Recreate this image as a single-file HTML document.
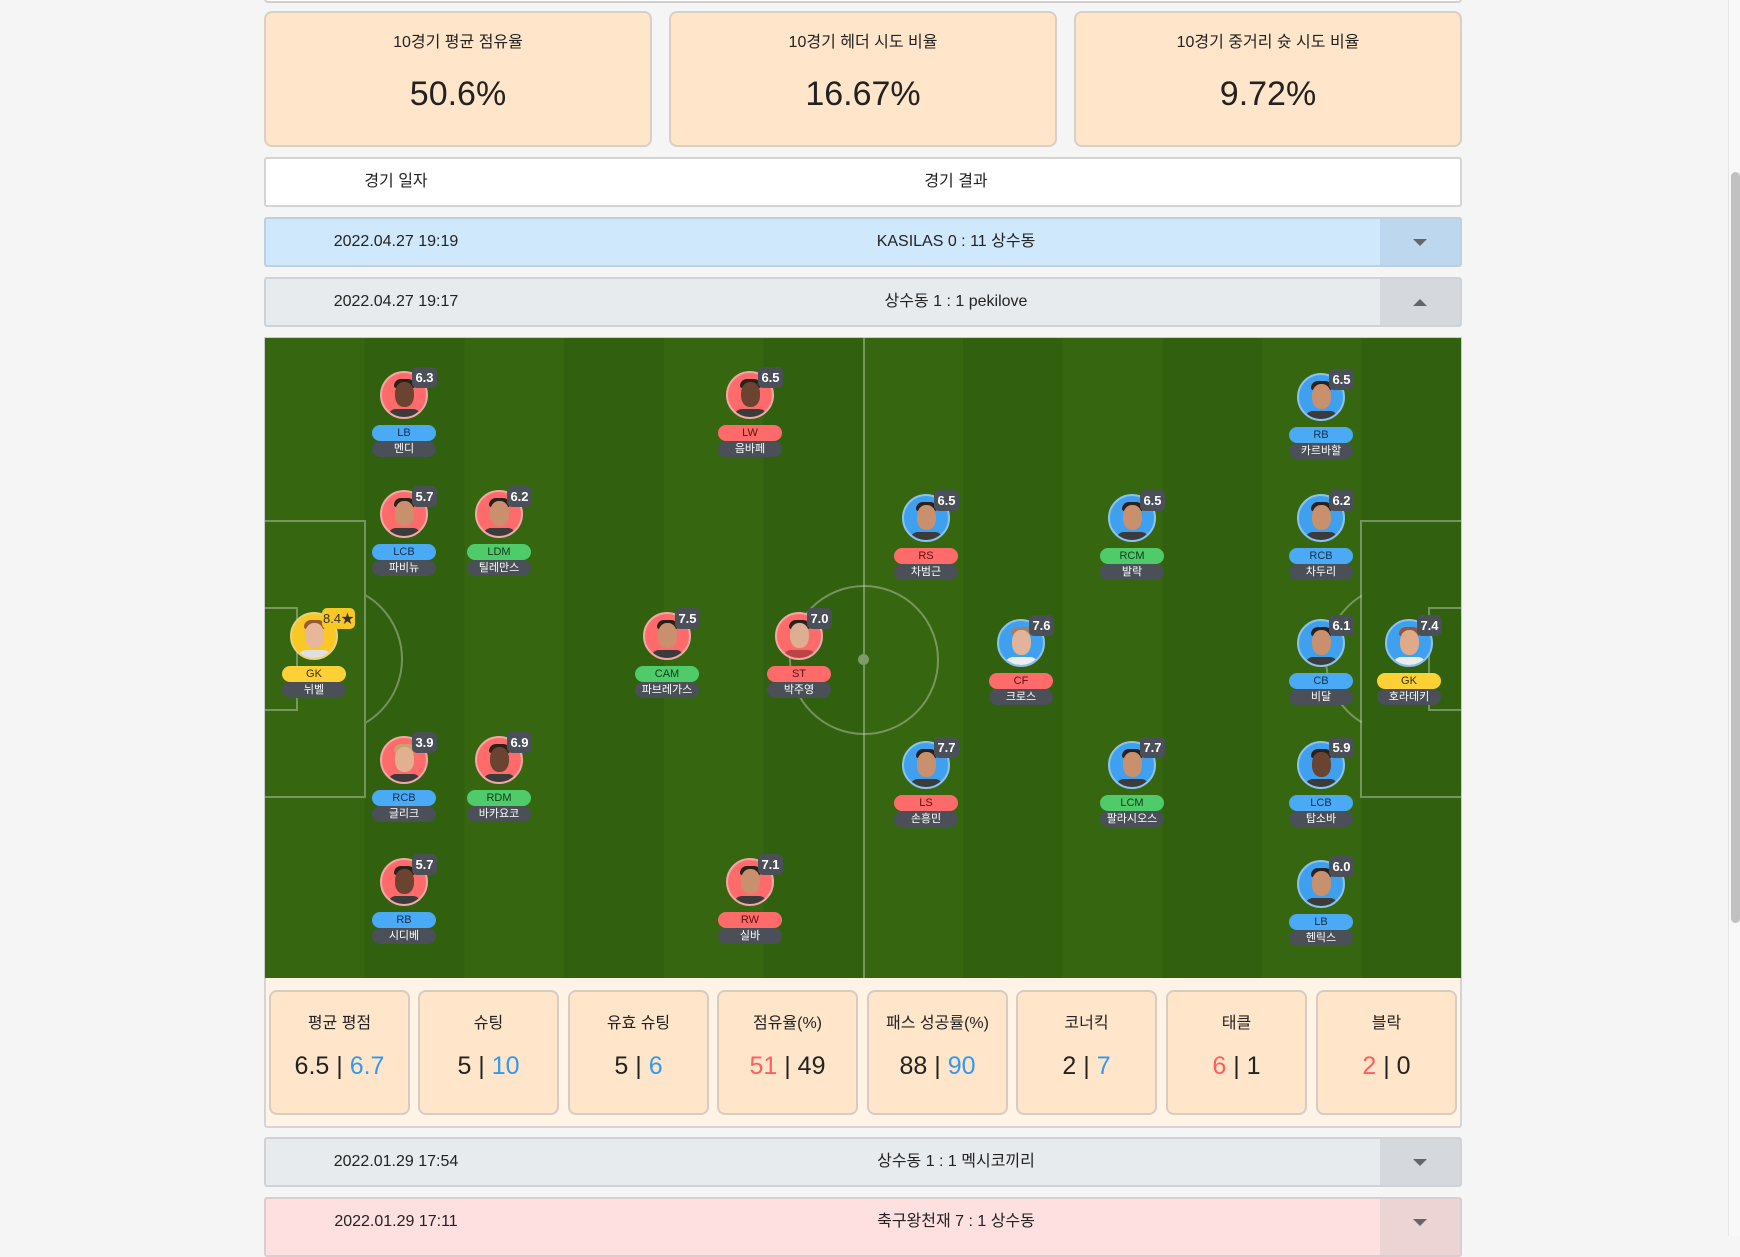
<!DOCTYPE html>
<html><head><meta charset="utf-8">
<style>
*{box-sizing:border-box;margin:0;padding:0}
html,body{width:1740px;height:1236px;overflow:hidden;background:#f5f5f5;font-family:"Liberation Sans","Noto Sans CJK KR",sans-serif;color:#222}
.a{position:absolute}
.card{position:absolute;top:11px;width:388px;height:136px;background:#ffe6cb;border:2px solid #d8cfc6;border-radius:8px;text-align:center}
.card .t{position:absolute;top:15px;left:0;right:0;font-size:16px}
.card .v{position:absolute;top:62px;left:0;right:0;font-size:34px;font-weight:500}
.row{position:absolute;left:264px;width:1198px;height:50px;border:2px solid #cfd3d8;border-radius:3px;font-size:16px;line-height:46px}
.row .d{position:absolute;left:0;width:260px;top:0;text-align:center}
.row .r{position:absolute;left:260px;width:860px;top:0;text-align:center}
.row .tg{position:absolute;right:0;top:0;bottom:0;width:80px}
.tri{position:absolute;left:33px;top:20px;width:0;height:0;border-left:7px solid transparent;border-right:7px solid transparent;border-top:7px solid #666}
.up{border-top:none;border-bottom:7px solid #666}
.pitch{position:absolute;left:264px;top:337px;width:1198px;height:642px;border:1px solid #ccc;overflow:hidden;
background:repeating-linear-gradient(90deg,#36660f 0,#36660f 99.7px,#31600f 99.7px,#31600f 199.4px)}
.ln{position:absolute;border:2px solid rgba(200,210,190,.45)}
.p{position:absolute;width:64px}
.f{position:absolute;left:8px;top:0;width:48px;height:48px;border-radius:50%;border:2px solid #e8a0a0;overflow:hidden}
.f.r{background:#ff6b6b;border-color:#f0a8a8}.f.b{background:#3ea0ee;border-color:#8cc3ee}.f.y{background:#f9c825;border-color:#e9d27a}
.f i{position:absolute;left:13px;top:9px;width:19px;height:25px;border-radius:45%;background:#c9906e}
.f i.k{background:#6b4331}
.f em{position:absolute;left:12px;top:6px;width:21px;height:9px;border-radius:10px 10px 3px 3px;background:#2b211c}
.f u{position:absolute;left:6px;top:36px;width:33px;height:12px;border-radius:8px 8px 0 0;background:#3b3b3b}
.rt{position:absolute;left:40px;top:-4px;width:25px;height:21px;border-radius:5px;background:#4a4f58;color:#fff;font-size:13px;font-weight:bold;text-align:center;line-height:21px}
.rt.y{background:#f9c825;color:#333;width:33px;font-weight:normal}
.ps{position:absolute;left:0;top:54px;width:64px;height:16px;border-radius:8px;font-size:11px;text-align:center;line-height:16px}
.ps.b{background:#4aaaf5;color:#12304a}.ps.r{background:#ff6b6b;color:#5a1010}.ps.g{background:#4fcb6a;color:#0f3a19}.ps.y{background:#fdd136;color:#3a2e00}
.nm{position:absolute;left:0;top:70px;width:64px;height:16px;border-radius:8px;background:#4a4f58;color:#fff;font-size:11px;text-align:center;line-height:16px}
.sb{position:absolute;top:990px;width:141px;height:125px;background:#ffe6cb;border:2px solid #d5ccc4;border-radius:8px;text-align:center}
.sb .t{position:absolute;top:17px;left:0;right:0;font-size:16px}
.sb .v{position:absolute;top:60px;left:0;right:0;font-size:25px}
.R{color:#ff5e5e}.B{color:#3399ee}
</style></head><body>
<div class="a" style="left:264px;top:-8px;width:1198px;height:11px;border:2px solid #d0d0d0;border-radius:4px;background:#fff"></div>

<div class="card" style="left:264px"><div class="t">10경기 평균 점유율</div><div class="v">50.6%</div></div>
<div class="card" style="left:669px"><div class="t">10경기 헤더 시도 비율</div><div class="v">16.67%</div></div>
<div class="card" style="left:1074px"><div class="t">10경기 중거리 슛 시도 비율</div><div class="v">9.72%</div></div>

<div class="row" style="top:157px;background:#fff;border-color:#d4d4d4"><div class="d">경기 일자</div><div class="r">경기 결과</div></div>
<div class="row" style="top:217px;background:#cfe8fc;border-color:#bcd0e0"><div class="d">2022.04.27 19:19</div><div class="r">KASILAS 0 : 11 상수동</div><div class="tg" style="background:#bdd8ee"><div class="tri"></div></div></div>
<div class="row" style="top:277px;background:#e8ebee;border-color:#cfd3d8"><div class="d">2022.04.27 19:17</div><div class="r">상수동 1 : 1 pekilove</div><div class="tg" style="background:#d5d8dc"><div class="tri up"></div></div></div>

<div class="pitch">
<div class="ln" style="left:598px;top:-2px;width:2px;height:650px;border-width:0 0 0 2px"></div>
<div class="ln" style="left:524px;top:247px;width:150px;height:150px;border-radius:50%"></div>
<div class="a" style="left:593px;top:316px;width:11px;height:11px;border-radius:50%;background:#7f9a6a"></div>
<div class="ln" style="left:-2px;top:182px;width:103px;height:278px"></div>
<div class="ln" style="left:-2px;top:269px;width:35px;height:104px"></div>
<div class="ln" style="left:-12px;top:246px;width:150px;height:150px;border-radius:50%;clip-path:inset(0 0 0 113px)"></div>
<div class="ln" style="left:1095px;top:182px;width:103px;height:278px"></div>
<div class="ln" style="left:1163px;top:269px;width:35px;height:104px"></div>
<div class="ln" style="left:1060px;top:246px;width:150px;height:150px;border-radius:50%;clip-path:inset(0 113px 0 0)"></div>
</div>

<div class="p" style="left:372px;top:371px"><div class="f r"><em></em><i class="k"></i><u></u></div><div class="rt">6.3</div><div class="ps b">LB</div><div class="nm">멘디</div></div>
<div class="p" style="left:718px;top:371px"><div class="f r"><em></em><i class="k"></i><u></u></div><div class="rt">6.5</div><div class="ps r">LW</div><div class="nm">음바페</div></div>
<div class="p" style="left:372px;top:490px"><div class="f r"><em></em><i></i><u></u></div><div class="rt">5.7</div><div class="ps b">LCB</div><div class="nm">파비뉴</div></div>
<div class="p" style="left:467px;top:490px"><div class="f r"><em></em><i></i><u></u></div><div class="rt">6.2</div><div class="ps g">LDM</div><div class="nm">틸레만스</div></div>
<div class="p" style="left:282px;top:612px"><div class="f y"><em style="background:#9a5a30"></em><i style="background:#e6b79a"></i><u style="background:#e0e0e0"></u></div><div class="rt y">8.4★</div><div class="ps y">GK</div><div class="nm">뉘벨</div></div>
<div class="p" style="left:635px;top:612px"><div class="f r"><em></em><i></i><u></u></div><div class="rt">7.5</div><div class="ps g">CAM</div><div class="nm">파브레가스</div></div>
<div class="p" style="left:767px;top:612px"><div class="f r"><em></em><i style="background:#dcae92"></i><u style="background:#b44"></u></div><div class="rt">7.0</div><div class="ps r">ST</div><div class="nm">박주영</div></div>
<div class="p" style="left:372px;top:736px"><div class="f r"><em style="background:#c9a070"></em><i style="background:#e0b090"></i><u></u></div><div class="rt">3.9</div><div class="ps b">RCB</div><div class="nm">글리크</div></div>
<div class="p" style="left:467px;top:736px"><div class="f r"><em></em><i class="k"></i><u></u></div><div class="rt">6.9</div><div class="ps g">RDM</div><div class="nm">바카요코</div></div>
<div class="p" style="left:372px;top:858px"><div class="f r"><em></em><i class="k"></i><u></u></div><div class="rt">5.7</div><div class="ps b">RB</div><div class="nm">시디베</div></div>
<div class="p" style="left:718px;top:858px"><div class="f r"><em></em><i></i><u></u></div><div class="rt">7.1</div><div class="ps r">RW</div><div class="nm">실바</div></div>

<div class="p" style="left:1289px;top:373px"><div class="f b"><em></em><i></i><u></u></div><div class="rt">6.5</div><div class="ps b">RB</div><div class="nm">카르바할</div></div>
<div class="p" style="left:894px;top:494px"><div class="f b"><em></em><i></i><u></u></div><div class="rt">6.5</div><div class="ps r">RS</div><div class="nm">차범근</div></div>
<div class="p" style="left:1100px;top:494px"><div class="f b"><em></em><i></i><u></u></div><div class="rt">6.5</div><div class="ps g">RCM</div><div class="nm">발락</div></div>
<div class="p" style="left:1289px;top:494px"><div class="f b"><em></em><i></i><u></u></div><div class="rt">6.2</div><div class="ps b">RCB</div><div class="nm">차두리</div></div>
<div class="p" style="left:989px;top:619px"><div class="f b"><em style="background:#a08060"></em><i style="background:#e0b49a"></i><u style="background:#eee"></u></div><div class="rt">7.6</div><div class="ps r">CF</div><div class="nm">크로스</div></div>
<div class="p" style="left:1289px;top:619px"><div class="f b"><em></em><i></i><u></u></div><div class="rt">6.1</div><div class="ps b">CB</div><div class="nm">비달</div></div>
<div class="p" style="left:1377px;top:619px"><div class="f b"><em style="background:#8a5a3a"></em><i style="background:#e0aa8a"></i><u style="background:#eee"></u></div><div class="rt">7.4</div><div class="ps y">GK</div><div class="nm">호라데키</div></div>
<div class="p" style="left:894px;top:741px"><div class="f b"><em></em><i></i><u></u></div><div class="rt">7.7</div><div class="ps r">LS</div><div class="nm">손흥민</div></div>
<div class="p" style="left:1100px;top:741px"><div class="f b"><em></em><i></i><u></u></div><div class="rt">7.7</div><div class="ps g">LCM</div><div class="nm">팔라시오스</div></div>
<div class="p" style="left:1289px;top:741px"><div class="f b"><em></em><i class="k"></i><u></u></div><div class="rt">5.9</div><div class="ps b">LCB</div><div class="nm">탑소바</div></div>
<div class="p" style="left:1289px;top:860px"><div class="f b"><em></em><i></i><u></u></div><div class="rt">6.0</div><div class="ps b">LB</div><div class="nm">헨릭스</div></div>

<div class="a" style="left:264px;top:978px;width:1198px;height:150px;background:#fff3e6;border:2px solid #d4d4d4;border-top:none;border-radius:0 0 3px 3px"></div>
<div class="sb" style="left:269px"><div class="t">평균 평점</div><div class="v">6.5 | <span class="B">6.7</span></div></div>
<div class="sb" style="left:418px"><div class="t">슈팅</div><div class="v">5 | <span class="B">10</span></div></div>
<div class="sb" style="left:568px"><div class="t">유효 슈팅</div><div class="v">5 | <span class="B">6</span></div></div>
<div class="sb" style="left:717px"><div class="t">점유율(%)</div><div class="v"><span class="R">51</span> | 49</div></div>
<div class="sb" style="left:867px"><div class="t">패스 성공률(%)</div><div class="v">88 | <span class="B">90</span></div></div>
<div class="sb" style="left:1016px"><div class="t">코너킥</div><div class="v">2 | <span class="B">7</span></div></div>
<div class="sb" style="left:1166px"><div class="t">태클</div><div class="v"><span class="R">6</span> | 1</div></div>
<div class="sb" style="left:1316px"><div class="t">블락</div><div class="v"><span class="R">2</span> | 0</div></div>

<div class="row" style="top:1137px;background:#e8ebee;border-color:#cfd3d8"><div class="d">2022.01.29 17:54</div><div class="r">상수동 1 : 1 멕시코끼리</div><div class="tg" style="background:#d5d8dc"><div class="tri"></div></div></div>
<div class="row" style="top:1197px;height:60px;background:#fee0e1;border-color:#d8cfd0"><div class="d">2022.01.29 17:11</div><div class="r">축구왕천재 7 : 1 상수동</div><div class="tg" style="background:#ecd3d4"><div class="tri"></div></div></div>

<div class="a" style="left:1728px;top:0;width:12px;height:1236px;background:#f8f8f8;border-left:1px solid #e4e4e4"></div>
<div class="a" style="left:1731px;top:172px;width:9px;height:751px;border-radius:5px;background:#c1c1c1"></div>
</body></html>
